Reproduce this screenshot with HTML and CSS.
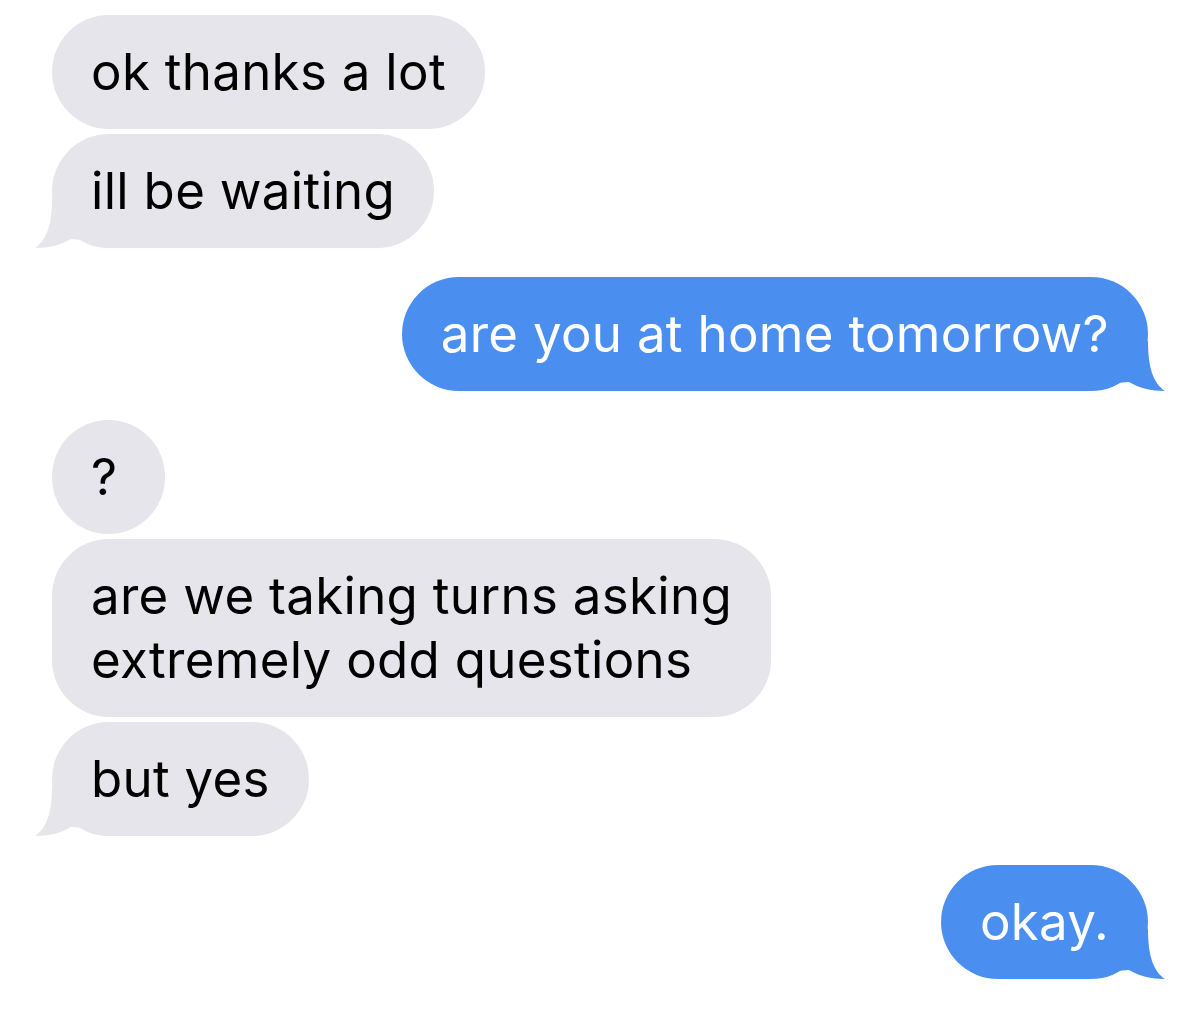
FILE: index.html
```html
<!DOCTYPE html>
<html lang="en">
<head>
  <meta charset="UTF-8" />
  <meta name="viewport" content="width=device-width, initial-scale=1.0"/>
  <title>Messages</title>
  <link rel="stylesheet" href="styles.css">
</head>
<body>
  <div class="thread">

    <div class="group them">
      <div class="bubble">ok thanks a lot</div>
      <div class="bubble tail">ill be waiting
        <svg class="tail-svg" width="50" height="50" viewBox="0 0 50 50"><path d="M17 0 C17 26 12 42 0 50 C14 50 26 47 36 41 L50 42 L50 0 Z"/></svg>
      </div>
    </div>

    <div class="group me">
      <div class="bubble tail">are you at home tomorrow?
        <svg class="tail-svg" width="50" height="50" viewBox="0 0 50 50"><path d="M33 0 C33 26 38 42 50 50 C36 50 24 47 14 41 L0 42 L0 0 Z"/></svg>
      </div>
    </div>

    <div class="group them">
      <div class="bubble">?</div>
      <div class="bubble">are we taking turns asking<br>extremely odd questions</div>
      <div class="bubble tail">but yes
        <svg class="tail-svg" width="50" height="50" viewBox="0 0 50 50"><path d="M17 0 C17 26 12 42 0 50 C14 50 26 47 36 41 L50 42 L50 0 Z"/></svg>
      </div>
    </div>

    <div class="group me">
      <div class="bubble tail">okay.
        <svg class="tail-svg" width="50" height="50" viewBox="0 0 50 50"><path d="M33 0 C33 26 38 42 50 50 C36 50 24 47 14 41 L0 42 L0 0 Z"/></svg>
      </div>
    </div>

  </div>
</body>
</html>
```

FILE: styles.css
```css
body {
  margin: 0;
  background-color: #ffffff;
  font-family: Inter, "Noto Sans", sans-serif;
}

.thread {
  display: flex;
  flex-direction: column;
  gap: 29px;
  padding: 15px 52px;
}

.group {
  display: flex;
  flex-direction: column;
  gap: 5px;
}

.group.them {
  align-items: flex-start;
}

.group.me {
  align-items: flex-end;
}

.bubble {
  position: relative;
  min-width: 35px;
  font-size: 51px;
  letter-spacing: 0.3px;
  line-height: 64px;
  padding: 25px 39px;
  border-radius: 57px;
  white-space: nowrap;
}

.them .bubble {
  background-color: #e6e5eb;
  color: #000000;
}

.me .bubble {
  background-color: #4a8ff0;
  color: #ffffff;
}

.tail-svg {
  position: absolute;
  bottom: 0;
}

.them .tail-svg {
  left: -17px;
  fill: #e6e5eb;
}

.me .tail-svg {
  right: -17px;
  fill: #4a8ff0;
}
```
